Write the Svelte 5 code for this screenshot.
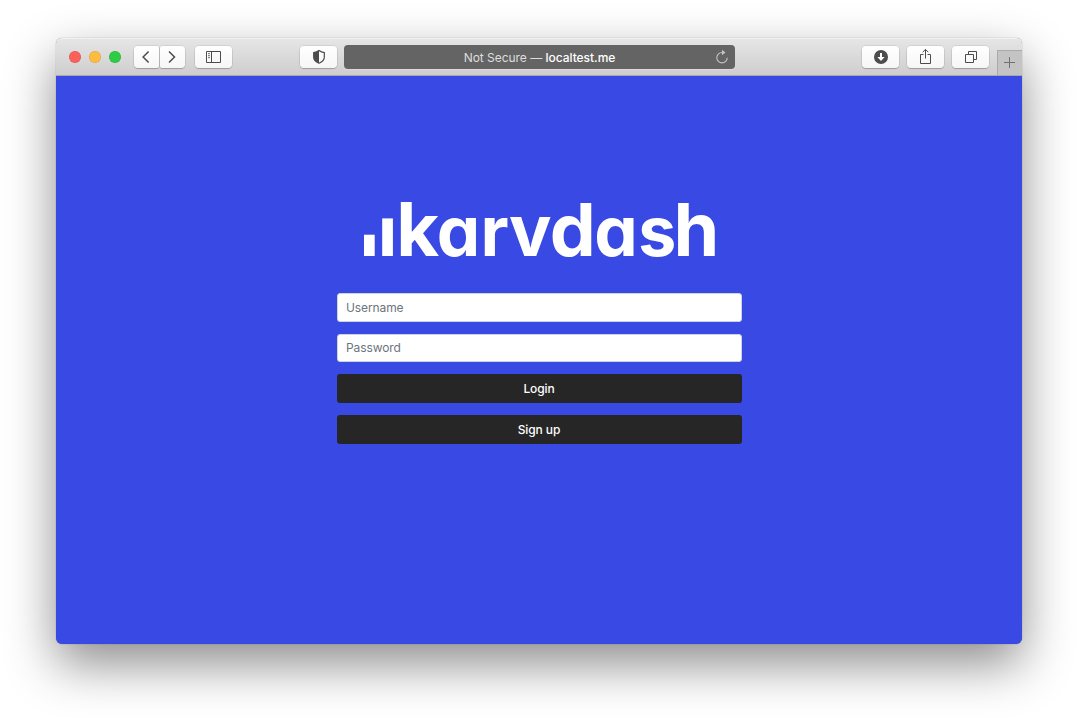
<script>
  let username = $state('');
  let password = $state('');

  // Wordmark letters: glyph, x origin, font size
  const wordmark = [
    ['k', 33.3, 74], ['a', 73.7, 69], ['r', 117.5, 69], ['v', 145.9, 71],
    ['d', 186.8, 73], ['a', 231.3, 69], ['s', 275.2, 68], ['h', 310.5, 73.5],
  ];
</script>

<div class="desktop">
  <div class="window">
    <header>
      <div class="lights"><i class="close"></i><i class="minimise"></i><i class="grow"></i></div>
      <div class="nav">
        <button class="tool half" aria-label="Back">
          <svg width="26" height="22" viewBox="0 0 26 22"><path d="M15.6 5.5 10.1 11l5.5 5.5" stroke-width="1.5" /></svg>
        </button>
        <button class="tool half" aria-label="Forward">
          <svg width="26" height="22" viewBox="0 0 26 22"><path d="M10 5.5 15.5 11 10 16.5" stroke-width="1.5" /></svg>
        </button>
      </div>
      <button class="tool sidebar" aria-label="Sidebar">
        <svg width="37" height="22" viewBox="0 0 37 22"><path d="M11.5 5.5h14v11h-14zM16.5 5.5v11" /><path d="M13 7.7h2M13 9.7h2M13 11.7h2" stroke-width=".8" /></svg>
      </button>
      <button class="tool privacy" aria-label="Privacy report">
        <svg width="37" height="22" viewBox="0 0 37 22"><path d="M19 4.6c1.8 1.3 3.4 1.8 5.3 2v4.6c0 2.8-2 4.6-5.3 6-3.3-1.4-5.3-3.2-5.3-6V6.6c1.9-.2 3.5-.7 5.3-2z" stroke-width="1.2" /><path class="solid" d="M19 4.6c-1.8 1.3-3.4 1.8-5.3 2v4.6c0 2.8 2 4.6 5.3 6z" /></svg>
      </button>
      <div class="address">
        <span>Not Secure — <b>localtest.me</b></span>
        <svg width="16" height="16" viewBox="0 0 16 16"><path d="M9 3.5H8a5.2 5.2 0 1 0 5.2 5.2" stroke="#c4c4c4" stroke-width="1.1" /><path d="M8 .8 11.5 3.5 8 6.2z" fill="#c4c4c4" stroke="none" /></svg>
      </div>
      <button class="tool downloads" aria-label="Downloads">
        <svg width="37" height="22" viewBox="0 0 37 22"><circle class="solid" cx="19" cy="11" r="7" /><path d="M19 7v5" stroke="#fff" stroke-width="2" /><path d="M15.4 11h7.2l-3.6 4z" fill="#fff" stroke="none" /></svg>
      </button>
      <button class="tool share" aria-label="Share">
        <svg width="37" height="22" viewBox="0 0 37 22"><path d="M16.5 8.5h-3v9h10v-9h-3M18.5 12.5v-9M15.7 6.2l2.8-2.8 2.8 2.8" /></svg>
      </button>
      <button class="tool tabs" aria-label="Tabs">
        <svg width="37" height="22" viewBox="0 0 37 22"><path d="M13.5 8.5h8v8h-8zM16.5 8.3V5.5h8v8h-2.8" /></svg>
      </button>
      <button class="new-tab" aria-label="New tab">
        <svg width="24" height="24" viewBox="0 0 24 24"><path d="M6 11.5h11M11.5 6v11" stroke="#707070" /></svg>
      </button>
    </header>

    <main>
      <svg class="logo" width="352" height="58" viewBox="0 0 352 58">
        <g class="bars">
          <rect x="1" y="34.7" width="10.7" height="21.3" />
          <rect x="19.2" y="18.4" width="10.7" height="37.6" />
        </g>
        <text y="55.9">{#each wordmark as [letter, x, size]}<tspan {x} font-size={size}>{letter}</tspan>{/each}</text>
      </svg>
      <form onsubmit={(e) => e.preventDefault()}>
        <input type="text" placeholder="Username" bind:value={username} />
        <input type="password" placeholder="Password" bind:value={password} />
        <button class="action">Login</button>
        <button class="action last">Sign up</button>
      </form>
    </main>
  </div>
</div>

<style>
  :global(body) { background: #fff; overflow: hidden; }
  * { box-sizing: border-box; }
  button, input { font: inherit; letter-spacing: inherit; margin: 0; }
  .desktop {
    height: 718px;
    padding: 38px 56px 74px;
    font: 12px/16px Inter, "Liberation Sans", sans-serif;
    letter-spacing: -.1px;
    overflow: hidden;
  }
  .window {
    height: 606px;
    display: flex;
    flex-direction: column;
    border-radius: 6px;
    background: #3949e3;
    box-shadow: 0 0 1px rgba(0, 0, 0, .5), 0 20px 50px rgba(0, 0, 0, .45);
  }
  header {
    height: 38px;
    flex: none;
    display: flex;
    align-items: flex-start;
    padding: 8px 0 0 13px;
    border-bottom: 1px solid #a9a9ac;
    border-radius: 6px 6px 0 0;
    background: linear-gradient(#e6e6e6, #cecece);
    box-shadow: inset 0 1px #f1f1f1;
  }
  .lights { display: flex; gap: 8px; margin-top: 5px; }
  .lights i { width: 12px; height: 12px; border-radius: 50%; box-shadow: inset 0 0 0 .5px #0002; }
  .close { background: #fc605b; }
  .minimise { background: #fdbc40; }
  .grow { background: #2fcb45; }
  .nav { display: flex; gap: 1px; margin-left: 13px; }
  .tool {
    width: 37px;
    height: 22px;
    padding: 0;
    border: 0;
    border-radius: 4px;
    background: linear-gradient(#fff, #f6f6f6);
    box-shadow: 0 0 0 .5px #0002, 0 1px 1px #0003;
    flex: none;
  }
  .half { width: 25px; }
  .half:first-child { border-radius: 4px 2px 2px 4px; }
  .half:last-child { border-radius: 2px 4px 4px 2px; }
  svg { display: block; fill: none; stroke: #4c4c4c; }
  .half svg { margin-left: -.7px; }
  .solid { fill: #4c4c4c; stroke: none; }
  .sidebar { margin-left: 10px; }
  .privacy { margin-left: 68px; }
  .address {
    width: 391px;
    height: 24px;
    margin: -1px 0 0 7px;
    border-radius: 4px;
    background: #646464;
    color: #dedede;
    display: grid;
    grid-template-columns: 21px 1fr 21px;
    align-items: center;
    text-align: center;
    flex: none;
    box-shadow: 0 1px #dadada;
  }
  .address span { grid-column: 2; white-space: pre; padding-top: 2px; letter-spacing: -.03px; }
  .address b { font-weight: 500; color: #fff; }
  .address svg { margin-top: -1px; }
  .downloads { margin-left: 127px; }
  .share, .tabs { margin-left: 8px; }
  .new-tab {
    width: 25px;
    height: 25px;
    padding: 0;
    margin: 4px 0 0 auto;
    border: 1px solid #aaa;
    border-width: 1px 0 0 1px;
    background: #c4c4c4;
  }
  main {
    flex: 1;
    display: flex;
    flex-direction: column;
    align-items: center;
    padding-top: 124px;
  }
  .logo { flex: none; overflow: visible; }
  .bars { fill: #fff; stroke: none; }
  .logo text {
    font-family: Inter, "Liberation Sans", sans-serif;
    font-weight: 700;
    font-feature-settings: "cv11";
    letter-spacing: 0;
    fill: #fff;
    stroke: none;
  }
  form { width: 405px; margin-top: 35px; display: grid; gap: 12px; }
  input, .action { height: 28.7px; border-radius: 3px; width: 100%; }
  input {
    padding: 0 8.5px;
    border: 1px solid #ced4da;
    background: #fff;
    color: #495057;
    outline: none;
  }
  input[type="password"] { padding-bottom: 2px; }
  input::placeholder { color: #6c757d; opacity: 1; }
  .action { border: 0; background: #262626; color: #fff; font-weight: 500; padding: 0; }
  .last { padding-top: 1px; }
</style>
